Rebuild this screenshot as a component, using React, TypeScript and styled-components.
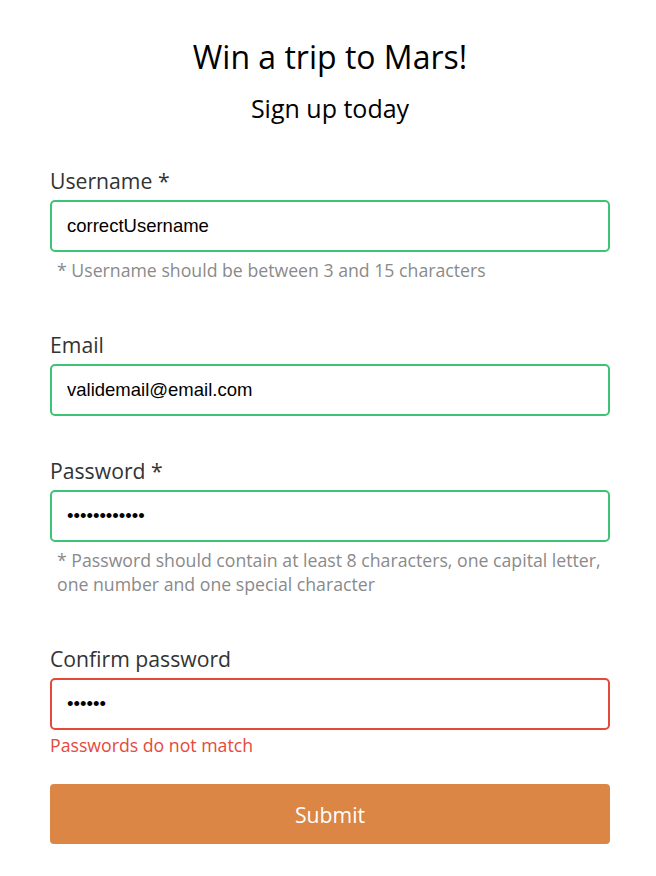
import React from "react";
import styled, { createGlobalStyle } from "styled-components";

const GlobalStyle = createGlobalStyle`
  html, body { margin: 0; padding: 0; background: #ffffff; }
  body { font-family: "Open Sans", "Noto Sans", sans-serif; color: #333333; }
  * { box-sizing: border-box; }
`;

const Page = styled.main`
  width: 560px;
  margin-left: 50px;
  padding-top: 35px;
  padding-bottom: 32px;
`;

const Header = styled.header`
  display: flex;
  flex-direction: column;
  align-items: center;
  gap: 13px;
  margin-bottom: 42px;
`;

const Title = styled.h1`
  margin: 0;
  font-size: 32px;
  line-height: 44px;
  font-weight: 400;
  color: #000000;
`;

const Subtitle = styled.h2`
  margin: 0;
  font-size: 25px;
  line-height: 33px;
  font-weight: 400;
  color: #000000;
`;

const Form = styled.form`
  display: flex;
  flex-direction: column;
`;

const Field = styled.div`
  display: flex;
  flex-direction: column;
  padding-bottom: 41px;
`;

const Label = styled.label`
  font-size: 21.2px;
  line-height: 27px;
  color: #333333;
  margin-bottom: 6px;
`;

const Input = styled.input<{ $state: "valid" | "invalid" }>`
  height: 52px;
  width: 100%;
  padding: 0 15px;
  font-family: "Liberation Sans", Arial, sans-serif;
  font-size: 18.5px;
  color: #000000;
  border-radius: 5px;
  border: 2px solid ${(p) => (p.$state === "valid" ? "#3cc474" : "#e5493c")};
  outline: none;
  background: #ffffff;
`;

const Hint = styled.span`
  font-size: 17.7px;
  line-height: 24px;
  color: #8a8a8a;
  padding-left: 7px;
  margin-top: 6px;
  margin-bottom: 8px;
`;

const ErrorText = styled.span`
  font-size: 17.7px;
  line-height: 24px;
  color: #e5493c;
  margin-top: 3px;
`;

const SubmitButton = styled.button`
  height: 60px;
  width: 100%;
  border: none;
  border-radius: 4px;
  background: #db8645;
  color: #ffffff;
  font-family: "Open Sans", "Noto Sans", sans-serif;
  font-size: 21.2px;
  cursor: pointer;
`;

const ConfirmField = styled(Field)`
  padding-bottom: 27px;
`;

export default function App() {
  return (
    <>
      <GlobalStyle />
      <Page>
        <Header>
          <Title>Win a trip to Mars!</Title>
          <Subtitle>Sign up today</Subtitle>
        </Header>
        <Form onSubmit={(e) => e.preventDefault()}>
          <Field>
            <Label htmlFor="username">Username *</Label>
            <Input id="username" $state="valid" type="text" defaultValue="correctUsername" />
            <Hint>* Username should be between 3 and 15 characters</Hint>
          </Field>
          <Field>
            <Label htmlFor="email">Email</Label>
            <Input id="email" $state="valid" type="email" defaultValue="validemail@email.com" />
          </Field>
          <Field>
            <Label htmlFor="password">Password *</Label>
            <Input id="password" $state="valid" type="password" defaultValue="abcdefghijkl" />
            <Hint>
              * Password should contain at least 8 characters, one capital letter, one number and one special character
            </Hint>
          </Field>
          <ConfirmField>
            <Label htmlFor="confirm">Confirm password</Label>
            <Input id="confirm" $state="invalid" type="password" defaultValue="abcdef" />
            <ErrorText>Passwords do not match</ErrorText>
          </ConfirmField>
          <SubmitButton type="submit">Submit</SubmitButton>
        </Form>
      </Page>
    </>
  );
}
